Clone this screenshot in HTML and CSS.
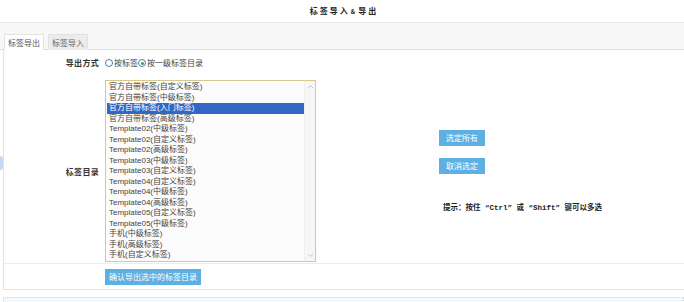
FILE: index.html
```html
<!DOCTYPE html>
<html lang="zh-CN">
<head>
<meta charset="utf-8">
<title>标签导入&amp;导出</title>
<link rel="stylesheet" href="styles.css">
</head>
<body>
<div class="title">标签导入<span class="amp">&amp;</span>导出</div>
<div class="tabbar">
  <span class="tab active">标签导出</span>
  <span class="tab">标签导入</span>
</div>
<div class="panel">
  <div class="row row-mode">
    <div class="label">导出方式</div>
    <div class="radios">
      <label class="radio"><span class="dot"></span>按标签</label>
      <label class="radio"><span class="dot checked"></span>按一级标签目录</label>
    </div>
  </div>
  <div class="row row-list">
    <div class="label strong">标签目录</div>
    <div class="listbox">
      <div class="options">
        <div class="opt">官方自带标签(自定义标签)</div>
        <div class="opt">官方自带标签(中级标签)</div>
        <div class="opt sel">官方自带标签(入门标签)</div>
        <div class="opt">官方自带标签(高级标签)</div>
        <div class="opt">Template02(中级标签)</div>
        <div class="opt">Template02(自定义标签)</div>
        <div class="opt">Template02(高级标签)</div>
        <div class="opt">Template03(中级标签)</div>
        <div class="opt">Template03(自定义标签)</div>
        <div class="opt">Template04(自定义标签)</div>
        <div class="opt">Template04(中级标签)</div>
        <div class="opt">Template04(高级标签)</div>
        <div class="opt">Template05(自定义标签)</div>
        <div class="opt">Template05(中级标签)</div>
        <div class="opt">手机(中级标签)</div>
        <div class="opt">手机(高级标签)</div>
        <div class="opt">手机(自定义标签)</div>
      </div>
      <div class="scrollbar">
        <svg class="arrow" width="7" height="5" viewBox="0 0 7 5"><path d="M1 4 L3.5 1.5 L6 4" fill="none" stroke="#c4c4c4" stroke-width="1"/></svg>
        <svg class="arrow" width="7" height="5" viewBox="0 0 7 5"><path d="M1 1 L3.5 3.5 L6 1" fill="none" stroke="#c4c4c4" stroke-width="1"/></svg>
      </div>
    </div>
    <div class="actions">
      <button class="btn">选定所有</button>
      <button class="btn second">取消选定</button>
      <div class="hint">提示：按住 “Ctrl” 或 “Shift” 键可以多选</div>
    </div>
  </div>
  <div class="row row-submit">
    <div class="label"></div>
    <button class="btn wide">确认导出选中的标签目录</button>
  </div>
</div>
<div class="footbox"></div>
<div class="handle"></div>
</body>
</html>
```
FILE: styles.css
```css
html, body {
  margin: 0;
  padding: 0;
  background: #fff;
}
body {
  position: relative;
  width: 684px;
  height: 302px;
  overflow: hidden;
  font-family: "Noto Sans CJK SC", "Liberation Sans", sans-serif;
  font-size: 8px;
  color: #333;
}
.title {
  height: 22px;
  line-height: 21px;
  text-align: center;
  font-weight: bold;
  font-size: 8px;
  letter-spacing: 2px;
  color: #222;
  padding-left: 4px;
}
.title .amp {
  font-size: 6px;
  margin: 0 1px;
}
.tabbar {
  height: 26px;
  background: #f7f7f7;
  border-top: 1px solid #e6e6e6;
  border-bottom: 1px solid #e0e0e0;
  display: flex;
  align-items: flex-end;
  gap: 4px;
  padding-left: 4px;
}
.tab {
  height: 15px;
  line-height: 15px;
  padding: 0 3px;
  font-size: 8px;
  color: #666;
  white-space: nowrap;
  background: #ececec;
  border: 1px solid #e2e2e2;
  border-bottom: none;
  margin-bottom: -1px;
  text-align: center;
}
.tab.active {
  background: #fff;
  height: 15px;
  color: #555;
}
.panel {
  margin-left: 3px;
  margin-right: -1px;
  border-left: 1px solid #e3e3e3;
  border-right: 1px solid #e3e3e3;
  border-bottom: 1px solid #e3e3e3;
}
.row {
  display: flex;
  align-items: center;
}
.label {
  width: 95px;
  flex: none;
  text-align: right;
  font-size: 8px;
  color: #333;
  letter-spacing: 0.3px;
}
.label.strong {
  font-weight: bold;
}
.row-mode {
  padding: 8px 0 6px;
  line-height: 10px;
}
.row-mode .label {
  font-weight: bold;
}
.radios {
  margin-left: 6px;
  display: flex;
  align-items: center;
  font-size: 8px;
  color: #444;
}
.radio {
  display: inline-flex;
  align-items: center;
}
.dot {
  width: 6px;
  height: 6px;
  border: 1px solid #4a7fb0;
  border-radius: 50%;
  background: #fff;
  margin-right: 1px;
  position: relative;
}
.dot.checked::after {
  content: "";
  position: absolute;
  left: 1.5px;
  top: 1.5px;
  width: 3px;
  height: 3px;
  border-radius: 50%;
  background: #3a9a50;
}
.row-list {
  padding: 6px 0 1px;
  border-bottom: 1px solid #ececec;
}
.listbox {
  margin-left: 6px;
  width: 211px;
  height: 182px;
  box-sizing: border-box;
  border: 1px solid #d8c88a;
  background: #fcfcfc;
  display: flex;
  flex: none;
}
.options {
  flex: 1;
  padding-top: 1px;
  padding-left: 1px;
}
.opt {
  height: 10.5px;
  line-height: 10.5px;
  padding-left: 2px;
  font-size: 8px;
  color: #444;
  white-space: nowrap;
  font-family: "Liberation Sans", "Noto Sans CJK SC", sans-serif;
}
.opt.sel {
  background: #3268c4;
  color: #fff;
}
.scrollbar {
  width: 10px;
  flex: none;
  background: #f6f6f6;
  border-left: 1px solid #f0f0f0;
  display: flex;
  flex-direction: column;
  justify-content: space-between;
  align-items: center;
  padding: 3px 0;
}
.actions {
  margin-left: 123px;
  display: flex;
  flex-direction: column;
  align-items: flex-start;
}
.btn {
  font-family: "Noto Sans CJK SC", sans-serif;
  font-size: 8px;
  color: #fff;
  background: #5fb0e2;
  border: none;
  height: 16px;
  line-height: 16px;
  padding: 0 5px;
  width: 46px;
  margin: 0;
  cursor: pointer;
}
.btn.second {
  margin-top: 12px;
}
.btn.wide {
  margin-left: 6px;
  width: 96px;
  padding: 0 3px;
}
.hint {
  margin-top: 27px;
  padding-left: 4px;
  font-family: "Liberation Mono", "Noto Sans CJK SC", monospace;
  font-weight: bold;
  font-size: 7.5px;
  color: #222;
  white-space: nowrap;
}
.row-submit {
  padding: 5px 0 4px;
}
.footbox {
  margin: 7px 0 0 3px;
  height: 12px;
  border: 1px dotted #c5d8ea;
  background: #f4f9fd;
}
.handle {
  position: absolute;
  left: 0;
  top: 156px;
  width: 3px;
  height: 14px;
  border-radius: 0 3px 3px 0;
  background: #c6d7ef;
}
```
